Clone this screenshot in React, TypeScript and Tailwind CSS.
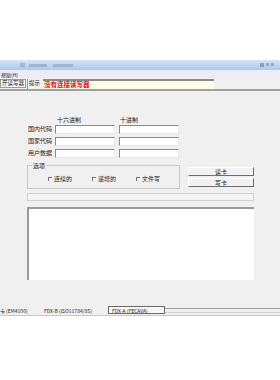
const font = { fontFamily: '"Noto Sans CJK SC", "Liberation Sans", sans-serif' };

const Input = () => (
  <div className="h-[9px] w-[60px] bg-white border-t border-l border-t-[#8a8a8a] border-l-[#8a8a8a] border-b border-r border-b-[#e8e8e8] border-r-[#e8e8e8]" />
);

const Check = ({ label }: { label: string }) => (
  <div className="flex items-center gap-[2px]">
    <div className="w-[4px] h-[4px] border-t border-l border-[#777]" />
    <span>{label}</span>
  </div>
);

const Btn = ({ label }: { label: string }) => (
  <div className="h-[9px] w-[66px] flex items-center justify-center bg-[#f2f2f2] border-b border-r border-[#6d6d6d] border-t border-l border-t-white border-l-white leading-none">
    {label}
  </div>
);

export default function App() {
  return (
    <div className="w-[280px] h-[380px] bg-white flex flex-col text-[6px] text-[#222] leading-none" style={font}>
      <div className="h-[60px] shrink-0" />
      {/* title bar */}
      <div className="h-[10px] shrink-0 bg-gradient-to-b from-[#d3e5f6] to-[#a9c9ec] flex items-center px-[20px]">
        <div className="w-[5px] h-[4px] bg-[#8aa0b8] opacity-60 mr-[4px]" />
        <div className="w-[18px] h-[3px] bg-[#7f96ad] opacity-50 mr-[6px]" />
        <div className="w-[20px] h-[3px] bg-[#7f96ad] opacity-50" />
        <div className="flex-1" />
        <div className="flex gap-[2px] mr-[-14px]">
          <div className="w-[4px] h-[4px] bg-[#6f8aa6] opacity-70" />
          <div className="w-[3px] h-[3px] bg-[#6f8aa6] opacity-60" />
          <div className="w-[3px] h-[3px] bg-[#6f8aa6] opacity-60" />
        </div>
      </div>
      {/* menu */}
      <div className="h-[8px] shrink-0 bg-[#ecebf7] flex items-center px-[1px] text-[5px]">帮助(H)</div>
      {/* toolbar */}
      <div className="h-[13px] shrink-0 bg-[#f0f0f0] flex items-center border-b-2 border-[#a0a0a0]">
        <div className="h-[9px] w-[26px] flex items-center justify-center border border-[#9a9a9a] bg-[#f8f8f8] text-[5.5px]">开读写器</div>
        <div className="w-px h-[10px] bg-[#9a9a9a] mx-[1px]" />
        <span className="mr-[3px] text-[5.5px]">提示</span>
        <div className="h-[10px] w-[171px] bg-[#fdfde8] border-t-2 border-[#8a8a8a] flex items-center pl-[1px] text-[#e0101a] font-bold text-[6.5px]">
          没有连接读写器
        </div>
      </div>
      {/* main */}
      <div className="h-[214px] shrink-0 bg-[#f0f0f0] flex flex-col pl-[27px] pt-[26px]">
        <div className="flex pl-[30px] gap-[39px] h-[6px]">
          <span>十六进制</span>
          <span>十进制</span>
        </div>
        <div className="flex flex-col gap-[2px] mt-[1px]">
          {['国内代码', '国家代码', '用户数据'].map((l) => (
            <div key={l} className="flex items-center h-[10px]">
              <span className="w-[28px] pl-[1px]">{l}</span>
              <Input />
              <div className="w-[4px]" />
              <Input />
            </div>
          ))}
        </div>
        <div className="flex mt-[7px] gap-[8px]">
          <div className="relative w-[153px] h-[24px] border border-[#c8c8c8]">
            <span className="absolute -top-[3px] left-[4px] bg-[#f0f0f0] px-[1px]">选项</span>
            <div className="flex items-center gap-[20px] pl-[20px] pt-[10px]">
              <Check label="连续的" />
              <Check label="递增的" />
              <Check label="文件写" />
            </div>
          </div>
          <div className="flex flex-col gap-[2px] pt-[2px]">
            <Btn label="读卡" />
            <Btn label="写卡" />
          </div>
        </div>
        <div className="w-[227px] h-[8px] mt-[4px] border border-[#d0d0d0] bg-[#f4f4f4]" />
        <div className="w-[227px] h-[73px] mt-[6px] bg-white border-t-2 border-l-2 border-[#9a9a9a]" />
      </div>
      {/* status bar */}
      <div className="h-[11px] shrink-0 bg-[#f0f0f0] flex items-center border-b border-[#c8c8c8] text-[5px]">
        <span className="w-[44px]">卡 (EM4100)</span>
        <span className="w-[64px]">FDX-B (ISO11784/85)</span>
        <div className="h-[8px] w-[57px] flex items-center pl-[3px] border border-[#6a6a6a] bg-[#f6f6f6]">FDX-A (FECAVA)</div>
        <div className="flex-1 flex flex-col gap-[3px]">
          <div className="h-px bg-[#a0a0a0]" />
          <div className="h-px bg-[#d0d0d0]" />
        </div>
      </div>
      <div className="flex-1 bg-white" />
    </div>
  );
}
